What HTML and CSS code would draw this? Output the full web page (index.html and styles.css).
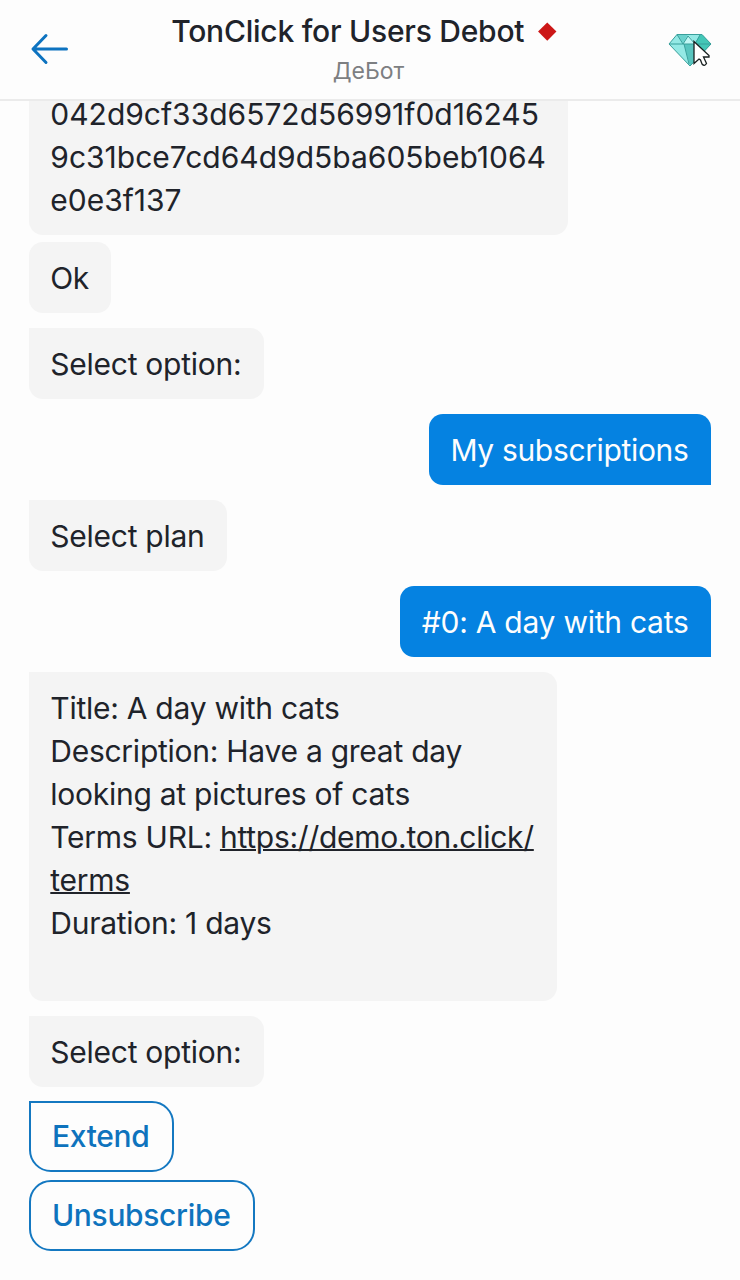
FILE: index.html
```html
<!DOCTYPE html>
<html lang="en">
<head>
<meta charset="utf-8">
<title>TonClick for Users Debot</title>
<link rel="stylesheet" href="styles.css">
</head>
<body>
<div class="app">
  <header class="header">
    <svg class="back" width="40" height="32" viewBox="0 0 40 32"><path d="M36.500 16H3.500M16 2.500L3 16L16 29.500"/></svg>
    <div class="heading">
      <h1 class="title"><span>TonClick for Users Debot</span><i class="status"></i></h1>
      <div class="subtitle">ДеБот</div>
    </div>
    <svg class="gem" width="44" height="38" viewBox="0 0 44 38">
      <path fill="#94e9e5" d="M1 12L9 2.500H34L43 12L22 34Z"/>
      <path fill="#6bd2cd" d="M9 2.500H20L15 11Z"/>
      <path fill="#c2f6f4" d="M15 12L21 4L27 12Z"/>
      <path fill="#58c5bf" d="M16 12H26V30L22 34Z"/>
      <path fill="#43c7b7" d="M27 11L32 2.500H34L43 12L36 20Z"/>
      <path class="facet" d="M1 12L9 2.500H34L43 12L22 34ZM1 12H43M9 2.500L15 12L20 4L27 12L32 3M16 12L21 32"/>
      <path class="cursor" d="M26 9.500V31.500L31 27L32.500 28L34 32Q36.500 35 38.500 31.500L35.500 25H41V23.500Z"/>
    </svg>
  </header>
  <main class="chat">
    <div class="bubble hash">042d9cf33d6572d56991f0d16245<br>9c31bce7cd64d9d5ba605beb1064<br>e0e3f137</div>
    <div class="bubble ok">Ok</div>
    <div class="bubble">Select option:</div>
    <div class="bubble mine subscriptions">My subscriptions</div>
    <div class="bubble">Select plan</div>
    <div class="bubble mine">#0: A day with cats</div>
    <div class="bubble details">Title: A day with cats<br>Description: Have a great day<br>looking at pictures of cats<br>Terms URL: <span class="link">https://demo.ton.click/<br>terms</span><br>Duration: 1 days</div>
    <div class="bubble">Select option:</div>
    <button class="action first">Extend</button>
    <button class="action">Unsubscribe</button>
  </main>
</div>
</body>
</html>
```
FILE: styles.css
```css
* { box-sizing: border-box; }
body { margin: 0; background: #fdfdfd; color: #20232a; font-family: Inter, sans-serif; }
.app { height: 1280px; overflow: hidden; display: flex; flex-direction: column; }
.header { height: 101px; flex: none; border-bottom: 2px solid #ebebeb; display: grid; grid-template-columns: 100px 1fr 100px; align-items: center; }
.back { margin: -2px 0 0 30px; fill: none; stroke: #0d73c0; stroke-width: 3; stroke-linecap: round; stroke-linejoin: round; }
.heading { text-align: center; align-self: start; }
.title { margin: 10px 0 0; padding-right: 15px; display: flex; justify-content: center; align-items: center; gap: 17px; font-size: 30px; line-height: 42px; font-weight: 500; letter-spacing: -.24px; white-space: nowrap; }
.status { width: 12.500px; height: 12.500px; background: #cc1717; transform: rotate(45deg); }
.subtitle { color: #7d7f82; font-size: 23px; line-height: 38px; padding-right: 3px; }
.gem { margin: 2px 0 0 28px; }
.facet { fill: none; stroke: #399f9b; stroke-width: 1; }
.cursor { fill: #fff; stroke: #182020; stroke-width: 1.3; }
.chat { padding: 0 29px; display: flex; flex-direction: column; align-items: flex-start; gap: 15px; }
.bubble { flex: none; min-height: 71px; padding: 15px 22.500px 13px 21.300px; border-radius: 0 14px 14px 14px; background: #f4f4f4; font-size: 30px; line-height: 43px; letter-spacing: -.26px; white-space: nowrap; }
.hash { width: 539px; height: 142px; min-height: 0; padding-top: 0; margin-top: -8px; border-radius: 0 0 14px 14px; letter-spacing: 0; clip-path: inset(8px 0 0); }
.ok { margin-top: -8px; width: 82px; letter-spacing: -.6px; border-radius: 14px; }
.mine { align-self: flex-end; background: #0582e1; color: #fdfdfd; border-radius: 14px 14px 0 14px; }
.subscriptions { letter-spacing: -.34px; }
.details { width: 527.500px; height: 328.500px; }
.link { text-decoration: underline; text-decoration-thickness: 2px; }
.action { height: 71px; padding: 0 23px 1px 21px; background: none; border: 2px solid #1478c1; border-radius: 22px; color: #0e73bd; font: 500 30px Inter, sans-serif; letter-spacing: -.34px; margin-top: -7.500px; }
.first { margin-top: -.500px; border-radius: 0 22px 22px 22px; }
```
